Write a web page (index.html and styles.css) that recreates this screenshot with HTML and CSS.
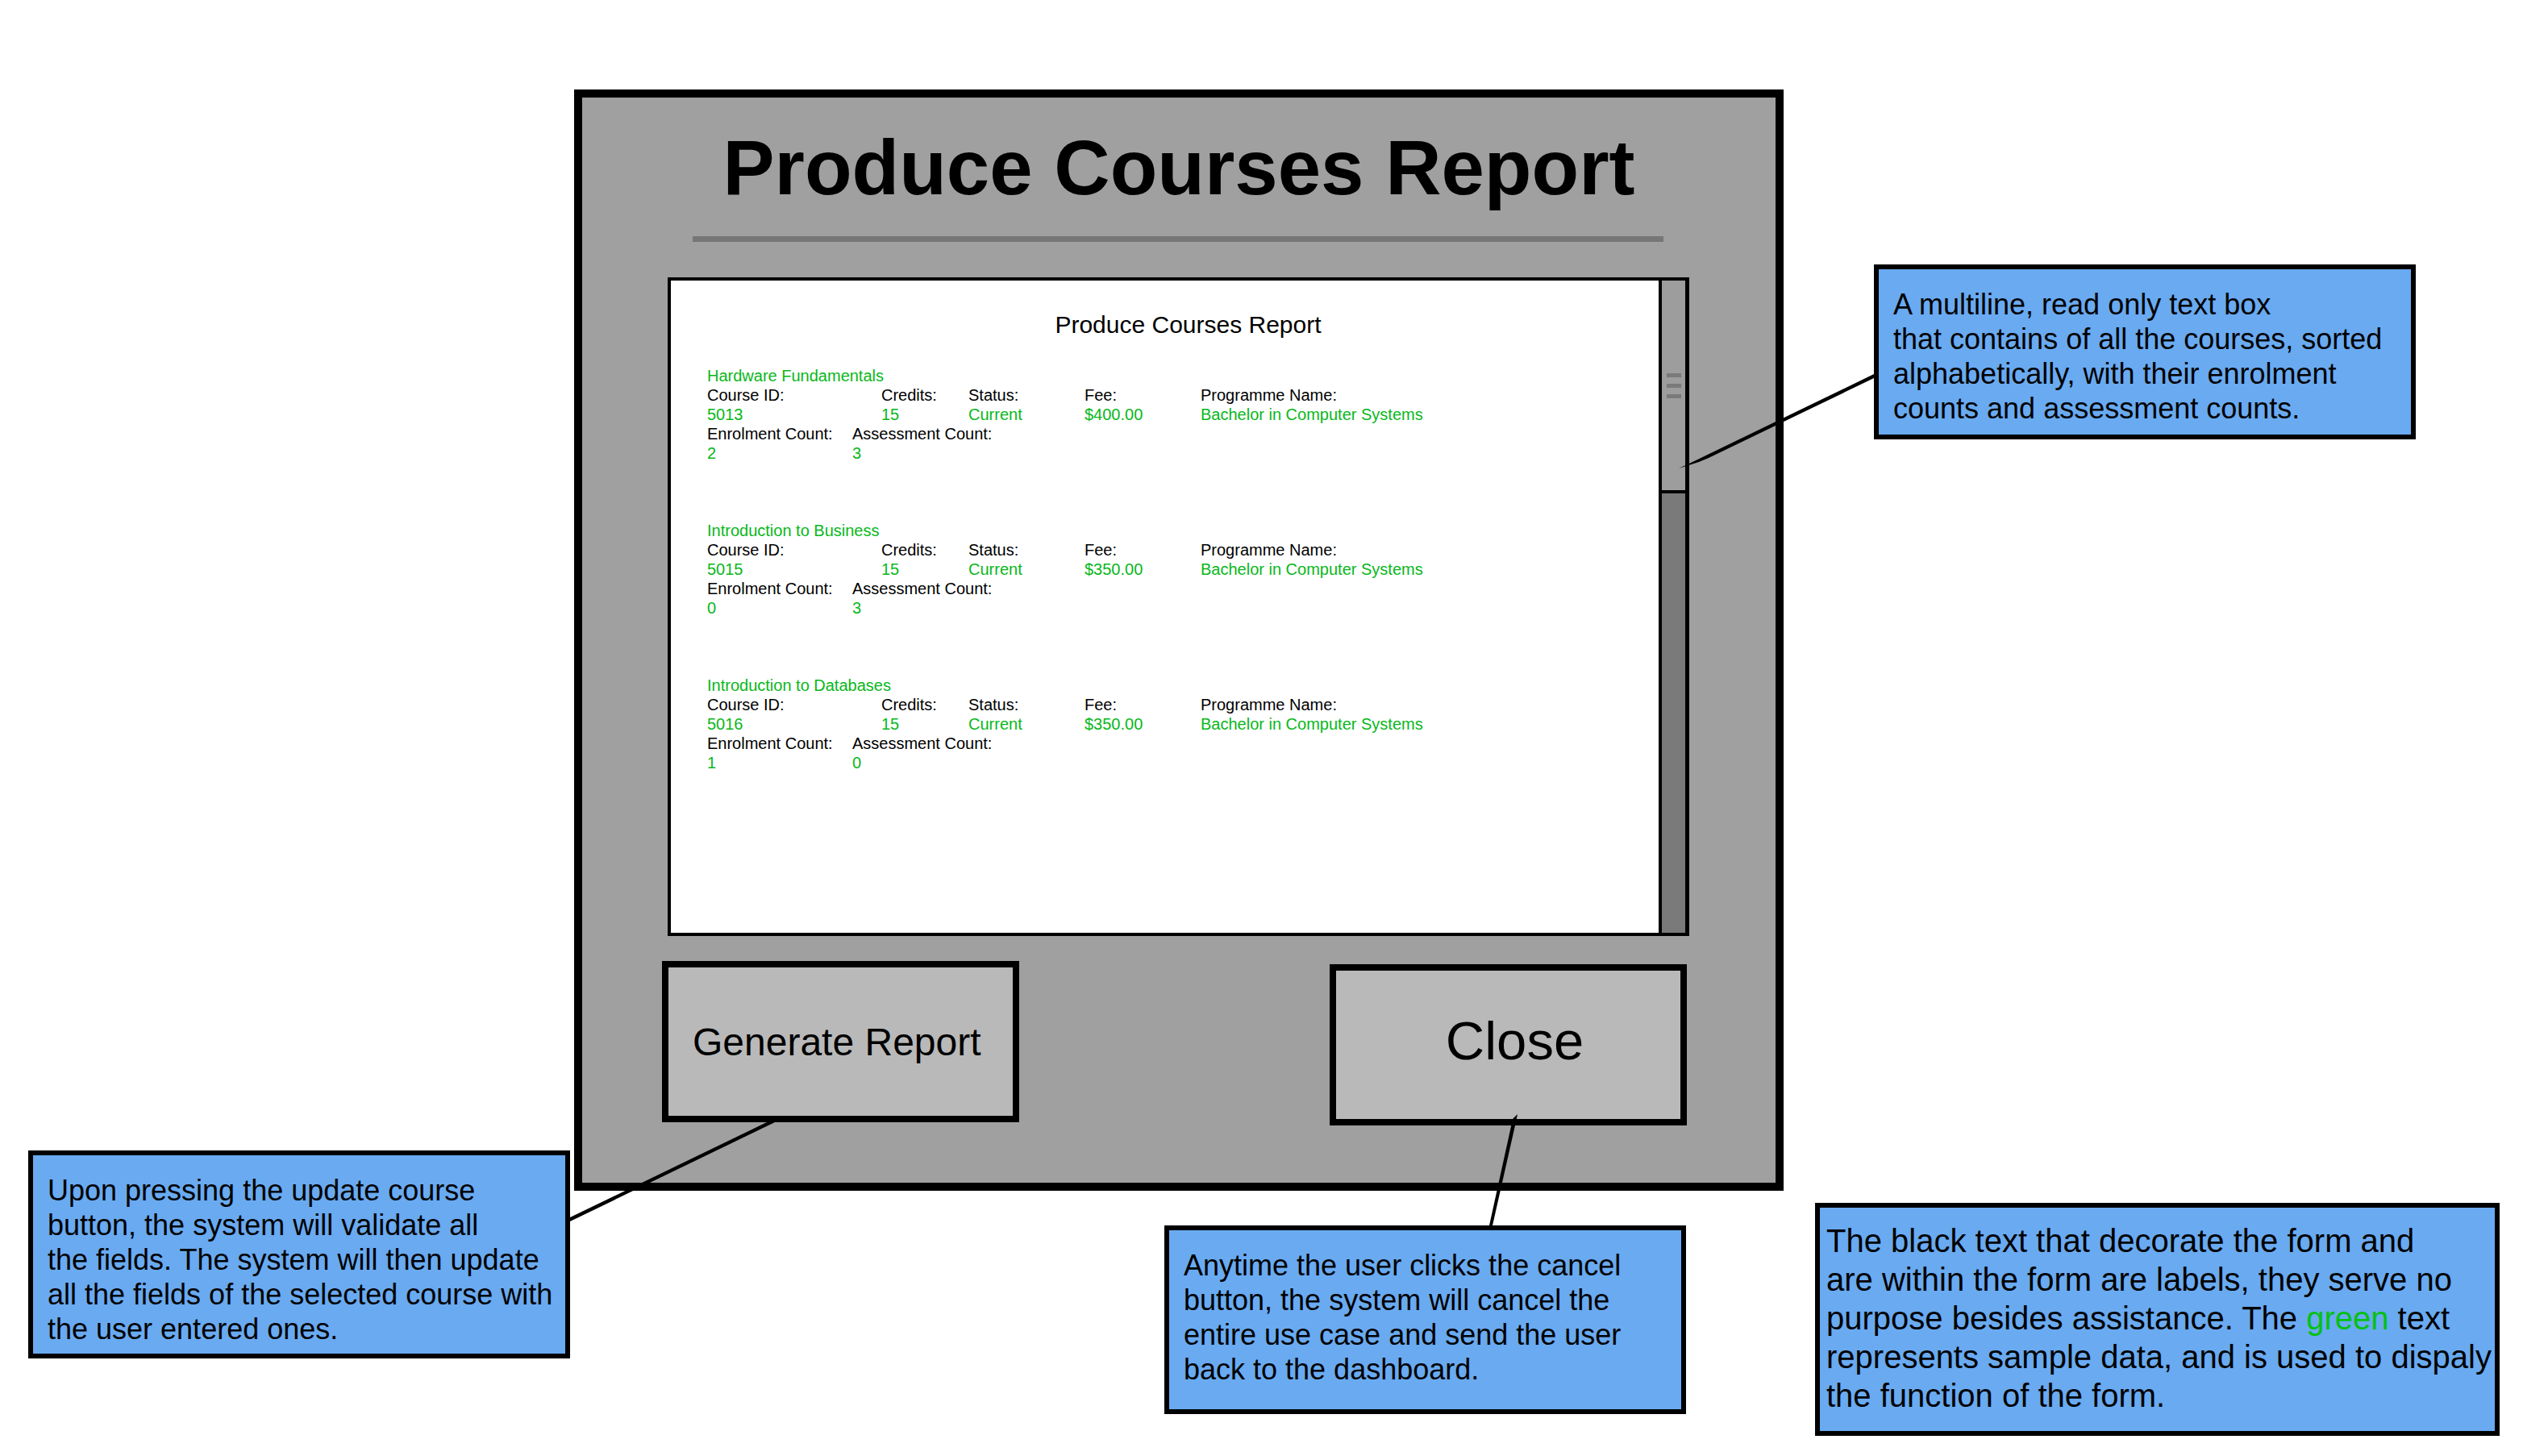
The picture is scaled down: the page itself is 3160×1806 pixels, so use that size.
FILE: index.html
```html
<!DOCTYPE html>
<html lang="en">
<head>
<meta charset="utf-8">
<title>Produce Courses Report</title>
<link rel="stylesheet" href="styles.css">
</head>
<body>
<main class="board">
  <div class="diagram">
    <form class="window">
      <h1 class="window-title">Produce Courses Report</h1>
      <hr class="rule">
      <div class="report">
        <div class="report-text" role="textbox" aria-multiline="true" aria-readonly="true" aria-label="Courses report" tabindex="0">
          <h2 class="report-title">Produce Courses Report</h2>
          <section class="course">
            <h3 class="course-name">Hardware Fundamentals</h3>
            <table class="details">
              <tr><th class="col-id">Course ID:</th><th class="col-credits">Credits:</th><th class="col-mid">Status:</th><th class="col-fee">Fee:</th><th>Programme Name:</th></tr>
              <tr><td>5013</td><td>15</td><td>Current</td><td>$400.00</td><td>Bachelor in Computer Systems</td></tr>
            </table>
            <table class="details">
              <tr><th class="col-count">Enrolment Count:</th><th>Assessment Count:</th></tr>
              <tr><td>2</td><td>3</td></tr>
            </table>
          </section>
          <section class="course">
            <h3 class="course-name">Introduction to Business</h3>
            <table class="details">
              <tr><th class="col-id">Course ID:</th><th class="col-credits">Credits:</th><th class="col-mid">Status:</th><th class="col-fee">Fee:</th><th>Programme Name:</th></tr>
              <tr><td>5015</td><td>15</td><td>Current</td><td>$350.00</td><td>Bachelor in Computer Systems</td></tr>
            </table>
            <table class="details">
              <tr><th class="col-count">Enrolment Count:</th><th>Assessment Count:</th></tr>
              <tr><td>0</td><td>3</td></tr>
            </table>
          </section>
          <section class="course">
            <h3 class="course-name">Introduction to Databases</h3>
            <table class="details">
              <tr><th class="col-id">Course ID:</th><th class="col-credits">Credits:</th><th class="col-mid">Status:</th><th class="col-fee">Fee:</th><th>Programme Name:</th></tr>
              <tr><td>5016</td><td>15</td><td>Current</td><td>$350.00</td><td>Bachelor in Computer Systems</td></tr>
            </table>
            <table class="details">
              <tr><th class="col-count">Enrolment Count:</th><th>Assessment Count:</th></tr>
              <tr><td>1</td><td>0</td></tr>
            </table>
          </section>
        </div>
        <div class="scrollbar" aria-hidden="true">
          <div class="thumb">
            <span class="grip"></span>
            <span class="grip"></span>
            <span class="grip"></span>
          </div>
        </div>
      </div>
      <div class="actions">
        <button type="button" class="action action-generate">Generate Report</button>
        <button type="button" class="action action-close">Close</button>
      </div>
    </form>

    <aside class="note note-textbox">
      <svg class="connector connector-textbox" width="242" height="120" viewBox="0 0 242 120" aria-hidden="true">
        <path d="M242 1V6L37 105L25 110L0 118L15 111Z"/>
      </svg>
      <p>A multiline, read only text box<br>that contains of all the courses, sorted<br>alphabetically, with their enrolment<br>counts and assessment counts.</p>
    </aside>

    <aside class="note note-generate">
      <svg class="connector connector-generate" width="254" height="123" viewBox="0 0 254 123" aria-hidden="true">
        <path d="M0 118V123L254 0H244Z"/>
      </svg>
      <p>Upon pressing the update course<br>button, the system will validate all<br>the fields. The system will then update<br>all the fields of the selected course with<br>the user entered ones.</p>
    </aside>

    <aside class="note note-close">
      <svg class="connector connector-close" width="36" height="138" viewBox="0 0 36 138" aria-hidden="true">
        <path d="M1 138H5L33 14L36 0L30 6Z"/>
      </svg>
      <p>Anytime the user clicks the cancel<br>button, the system will cancel the<br>entire use case and send the user<br>back to the dashboard.</p>
    </aside>

    <aside class="note note-legend">
      <p>The black text that decorate the form and<br>are within the form are labels, they serve no<br>purpose besides assistance. The <span class="sample">green</span> text<br>represents sample data, and is used to dispaly<br>the function of the form.</p>
    </aside>
  </div>
</main>
</body>
</html>
```
FILE: styles.css
```css
* {
  box-sizing: border-box;
}

body {
  margin: 0;
  background: #fff;
  color: #000;
  font-family: "Liberation Sans", Arial, sans-serif;
  overflow-x: hidden;
}

h1, h2, h3, p {
  margin: 0;
  font-weight: normal;
}

/* The form sits between two flexible margins that hold the notes. */
.board {
  display: grid;
  grid-template-columns: 712fr 1500fr 948fr;
  padding: 111px 0 329px;
}

.diagram {
  grid-column: 2;
  position: relative;
}

/* Form window */
.window {
  border: 10px solid #000;
  background: #a0a0a0;
  padding: 32px 0 71px;
}

.window-title {
  font-size: 96px;
  line-height: 110px;
  font-weight: bold;
  text-align: center;
  white-space: nowrap;
}

.rule {
  height: 7px;
  margin: 30px 139px 44px 137px;
  border: 0;
  background: #767676;
}

.report {
  display: flex;
  min-height: 817px;
  margin: 0 107px 0 106px;
  border: 4px solid #000;
  border-right-width: 5px;
  background: #fff;
}

.report-text {
  flex: 1;
  padding: 37px 0 0 45px;
  font-size: 20px;
  line-height: 24px;
}

.report-title {
  margin-bottom: 33px;
  padding-left: 13px;
  font-size: 30px;
  line-height: 36px;
  text-align: center;
}

.course {
  margin-bottom: 72px;
}

.course-name {
  font-size: 20px;
  color: #08b81a;
}

.details {
  width: 100%;
  table-layout: fixed;
  border-collapse: collapse;
}

.details th,
.details td {
  padding: 0;
  font-weight: normal;
  text-align: left;
  white-space: nowrap;
}

.details td {
  color: #08b81a;
}

.col-id {
  width: 216px;
}

.col-credits {
  width: 108px;
}

.col-mid,
.col-fee {
  width: 144px;
}

.col-count {
  width: 180px;
}

.scrollbar {
  width: 33px;
  border-left: 4px solid #000;
  background: #7a7a7a;
}

.thumb {
  display: flex;
  flex-direction: column;
  align-items: center;
  gap: 8px;
  height: 264px;
  padding-top: 115px;
  border-bottom: 4px solid #000;
  background: #9d9d9d;
}

.grip {
  width: 18px;
  height: 5px;
  background: #7a7a7a;
}

.actions {
  display: flex;
  justify-content: space-between;
  min-height: 204px;
  margin: 31px 110px 0 99px;
}

.action {
  width: 443px;
  height: 200px;
  border: 8px solid #000;
  border-radius: 0;
  background: #b9b9b9;
  color: #000;
  font-family: inherit;
}

.action-generate {
  padding: 0 40px 0 30px;
  font-size: 48px;
  text-align: left;
  white-space: nowrap;
}

.action-close {
  align-self: flex-end;
  padding: 0 0 12px 16px;
  font-size: 67px;
}

/* Notes are nodes of the diagram, pinned around the form window. */
.note {
  position: absolute;
  padding: 22px 0 0 18px;
  border: 6px solid #000;
  background: #69aaf1;
  font-size: 36px;
  line-height: 43px;
  white-space: nowrap;
}

.note-textbox {
  top: 217px;
  left: calc(100% + 112px);
  width: 672px;
  min-height: 217px;
}

.note-generate {
  top: 1316px;
  right: calc(100% + 5px);
  width: 672px;
  min-height: 258px;
}

.note-close {
  top: 1409px;
  right: 121px;
  width: 647px;
  min-height: 234px;
}

.note-legend {
  top: 1381px;
  left: calc(100% + 39px);
  width: 849px;
  min-height: 289px;
  padding: 17px 0 0 8px;
  font-size: 40px;
  line-height: 48px;
}

.note-legend .sample {
  color: #05c013;
}

/* Leader lines, each attached to the edge of its note. */
.connector {
  position: absolute;
  overflow: visible;
}

.connector-textbox {
  top: 129px;
  right: calc(100% + 6px);
}

.connector-generate {
  top: -41px;
  left: calc(100% + 6px);
}

.connector-close {
  bottom: calc(100% + 6px);
  left: 396px;
}
```
